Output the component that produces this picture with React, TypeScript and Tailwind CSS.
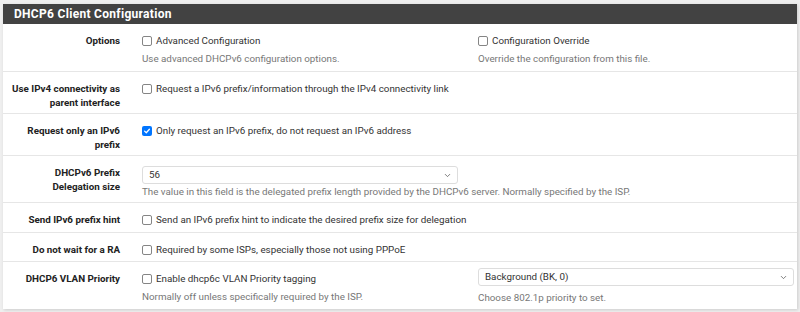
import { ChevronDown } from "lucide-react";
import { ReactNode } from "react";

function Box({ checked }: { checked?: boolean }) {
  if (checked) {
    return (
      <span className="inline-flex h-[10px] w-[10px] shrink-0 items-center justify-center rounded-[2px] bg-[#0075ff]">
        <svg viewBox="0 0 10 10" className="h-[8px] w-[8px]">
          <path d="M2 5.2 L4.1 7.2 L8 2.8" fill="none" stroke="#fff" strokeWidth="1.6" strokeLinecap="round" strokeLinejoin="round" />
        </svg>
      </span>
    );
  }
  return <span className="inline-block h-[10px] w-[10px] shrink-0 rounded-[2px] border border-[#858585] bg-white" />;
}

function Check({ text, checked }: { text: string; checked?: boolean }) {
  return (
    <div className="flex h-[14px] items-center gap-[4px] text-[#333]">
      <Box checked={checked} />
      <span>{text}</span>
    </div>
  );
}

function Help({ children }: { children: ReactNode }) {
  return <div className="mt-[4px] text-[#777]">{children}</div>;
}

function Select({ value }: { value: string }) {
  return (
    <div className="flex h-[18px] items-center justify-between rounded-[3px] border border-[#ddd] bg-white pl-[6px] pr-[5px] text-[#333]">
      <span>{value}</span>
      <ChevronDown size={9} strokeWidth={2} className="text-[#555]" />
    </div>
  );
}

function Row({ label, children, first, className }: { label: string[]; children: ReactNode; first?: boolean; className?: string }) {
  return (
    <div className={`flex pt-[10px] ${first ? "" : "border-t border-[#e6e6e6]"} ${className ?? "pb-[5px]"}`}>
      <div className="w-[117px] shrink-0 text-right font-bold text-[#222]">
        {label.map((l) => (
          <div key={l}>{l}</div>
        ))}
      </div>
      <div className="ml-[22px] flex-1">{children}</div>
    </div>
  );
}

export default function App() {
  return (
    <div className="h-[312px] w-[800px] overflow-hidden bg-[#efefef] px-[3px] pt-[4px] font-['Roboto',sans-serif] text-[9.8px] leading-[14px]">
      <div className="bg-white shadow-[1px_1px_3px_rgba(0,0,0,0.15)]">
        <div className="flex h-[20px] items-center bg-[#424242] pl-[11px] text-[12px] font-bold tracking-[0.3px] text-white">
          DHCP6 Client Configuration
        </div>

        <Row label={["Options"]} first>
          <div className="flex gap-[20px]">
            <div className="w-[316px]">
              <Check text="Advanced Configuration" />
              <Help>Use advanced DHCPv6 configuration options.</Help>
            </div>
            <div className="w-[316px]">
              <Check text="Configuration Override" />
              <Help>Override the configuration from this file.</Help>
            </div>
          </div>
        </Row>

        <Row label={["Use IPv4 connectivity as", "parent interface"]} className="pb-[3px]">
          <Check text="Request a IPv6 prefix/information through the IPv4 connectivity link" />
        </Row>

        <Row label={["Request only an IPv6", "prefix"]} className="pb-[3px]">
          <Check checked text="Only request an IPv6 prefix, do not request an IPv6 address" />
        </Row>

        <Row label={["DHCPv6 Prefix", "Delegation size"]} className="pb-[3px]">
          <div className="w-[316px]">
            <Select value="56" />
          </div>
          <div className="mt-[1px] text-[#777]">
            The value in this field is the delegated prefix length provided by the DHCPv6 server. Normally specified by the ISP.
          </div>
        </Row>

        <Row label={["Send IPv6 prefix hint"]}>
          <Check text="Send an IPv6 prefix hint to indicate the desired prefix size for delegation" />
        </Row>

        <Row label={["Do not wait for a RA"]} className="pb-[4px]">
          <Check text="Required by some ISPs, especially those not using PPPoE" />
        </Row>

        <Row label={["DHCP6 VLAN Priority"]} className="pb-[4px]">
          <div className="flex gap-[20px]">
            <div className="w-[316px]">
              <Check text="Enable dhcp6c VLAN Priority tagging" />
              <Help>Normally off unless specifically required by the ISP.</Help>
            </div>
            <div className="-mt-[4px] w-[316px]">
              <Select value="Background (BK, 0)" />
              <div className="mt-[5px] text-[#777]">Choose 802.1p priority to set.</div>
            </div>
          </div>
        </Row>
      </div>
    </div>
  );
}
